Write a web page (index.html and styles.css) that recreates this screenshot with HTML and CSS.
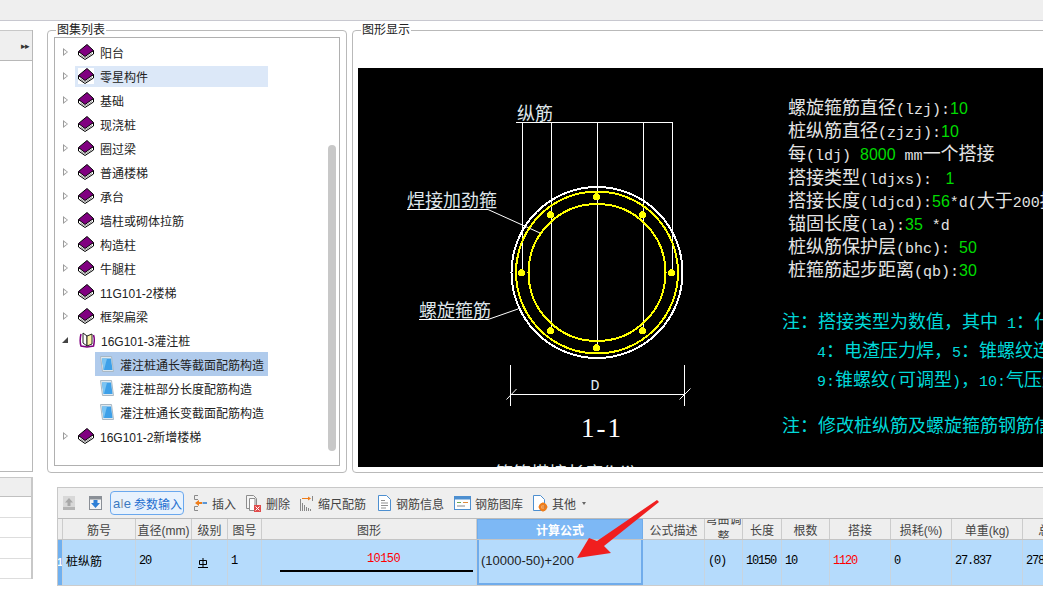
FILE: index.html
```html
<!DOCTYPE html>
<html lang="zh-CN">
<head>
    <meta charset="UTF-8">
    <title>图集列表</title>
    <link rel="stylesheet" href="styles.css">
</head>
<body>
    <svg class="defs" width="0" height="0">
        <symbol id="book" viewBox="0 0 16 16">
            <path d="M0.500 8V11L7 15.500 15.500 10V7Z" fill="#fff" stroke="#000"/>
            <path d="M2.500 11L7 14M7 14L14 9.500" stroke="#999" fill="none"/>
            <path d="M0.500 7.500L9 0.500 15.500 6.500 7 12.500Z" fill="#800080" stroke="#000"/>
        </symbol>
        <symbol id="book-open" viewBox="0 0 16 16">
            <path d="M2 2C1 6 1 11 2 14L8 15 14.500 14C15.500 10 15.500 6 14.500 3" fill="none" stroke="#800080" stroke-width="1.500"/>
            <path d="M4 1L8 4V14L4 11Z" fill="#fff" stroke="#222"/>
            <path d="M8 4L13 2V12L8 14Z" fill="#fdf4a8" stroke="#222"/>
        </symbol>
        <symbol id="doc" viewBox="0 0 14 18">
            <path d="M0.500 1.500H11.500L13.500 16.500H2.500Z" fill="#dfe8ee" stroke="#a9b8c4"/>
            <path d="M2 3.500H11L12.500 15H3.500Z" fill="#3ea0e8"/>
            <path d="M2 3.500H7L4 15H3.500Z" fill="#7cc4f2"/>
        </symbol>
    </svg>

    <div class="topbar"></div>

    <div class="workspace">
        <div class="side">
            <div class="side-top">
                <div class="side-head"><span class="side-arrows">&#9656;&#9656;</span></div>
            </div>
            <div class="side-bottom">
                <div class="side-row head"></div>
                <div class="side-row"></div>
                <div class="side-row"></div>
                <div class="side-row"></div>
                <div class="side-row"></div>
            </div>
        </div>

        <div class="main">
            <div class="upper">
                <div class="group group-tree">
                    <span class="legend">图集列表</span>
                    <div class="tree">
                        <div class="node"><i class="arrow"></i><div class="node-body"><svg class="book"><use href="#book"/></svg>阳台</div></div>
                        <div class="node hot"><i class="arrow"></i><div class="node-body"><svg class="book"><use href="#book"/></svg>零星构件</div></div>
                        <div class="node"><i class="arrow"></i><div class="node-body"><svg class="book"><use href="#book"/></svg>基础</div></div>
                        <div class="node"><i class="arrow"></i><div class="node-body"><svg class="book"><use href="#book"/></svg>现浇桩</div></div>
                        <div class="node"><i class="arrow"></i><div class="node-body"><svg class="book"><use href="#book"/></svg>圈过梁</div></div>
                        <div class="node"><i class="arrow"></i><div class="node-body"><svg class="book"><use href="#book"/></svg>普通楼梯</div></div>
                        <div class="node"><i class="arrow"></i><div class="node-body"><svg class="book"><use href="#book"/></svg>承台</div></div>
                        <div class="node"><i class="arrow"></i><div class="node-body"><svg class="book"><use href="#book"/></svg>墙柱或砌体拉筋</div></div>
                        <div class="node"><i class="arrow"></i><div class="node-body"><svg class="book"><use href="#book"/></svg>构造柱</div></div>
                        <div class="node"><i class="arrow"></i><div class="node-body"><svg class="book"><use href="#book"/></svg>牛腿柱</div></div>
                        <div class="node"><i class="arrow"></i><div class="node-body"><svg class="book"><use href="#book"/></svg>11G101-2楼梯</div></div>
                        <div class="node"><i class="arrow"></i><div class="node-body"><svg class="book"><use href="#book"/></svg>框架扁梁</div></div>
                        <div class="node"><i class="arrow open"></i><div class="node-body"><svg class="book"><use href="#book-open"/></svg>16G101-3灌注桩</div></div>
                        <div class="node child selected"><div class="node-body"><svg class="doc"><use href="#doc"/></svg>灌注桩通长等截面配筋构造</div></div>
                        <div class="node child"><div class="node-body"><svg class="doc"><use href="#doc"/></svg>灌注桩部分长度配筋构造</div></div>
                        <div class="node child"><div class="node-body"><svg class="doc"><use href="#doc"/></svg>灌注桩通长变截面配筋构造</div></div>
                        <div class="node"><i class="arrow"></i><div class="node-body"><svg class="book"><use href="#book"/></svg>16G101-2新增楼梯</div></div>
                        <div class="scroll-thumb"></div>
                    </div>
                </div>

                <div class="group group-view">
                    <span class="legend">图形显示</span>
                    <div class="canvas">
                        <svg class="drawing" viewBox="358 68 700 399" shape-rendering="crispEdges">
                            <g class="thin">
                                <path d="M516 122.500H672.500"/>
                                <path d="M522.500 122V272M551.500 122V330M597.500 122V347M643.500 122V330M672.500 122V272"/>
                                <path d="M407 209.500H488L540 233" shape-rendering="auto"/>
                                <path d="M419 319.500H488L518 309" shape-rendering="auto"/>
                                <path d="M510.500 365V406M684.500 365V406M510 394.500H685"/>
                                <path d="M506.500 399.500L516.500 389M679.500 399.500L690.500 388.500" shape-rendering="auto"/>
                            </g>
                            <circle class="ring-white" cx="597" cy="272.500" r="85.500"/>
                            <circle class="ring-yellow" cx="597" cy="272.500" r="81"/>
                            <circle class="ring-yellow" cx="597" cy="272.500" r="68.500"/>
                            <g class="bars">
                                <circle cx="521.500" cy="272.500" r="3.500"/>
                                <circle cx="550.500" cy="214.500" r="3.500"/>
                                <circle cx="596.500" cy="196.500" r="3.500"/>
                                <circle cx="642.500" cy="214.500" r="3.500"/>
                                <circle cx="671.500" cy="272.500" r="3.500"/>
                                <circle cx="642.500" cy="330.500" r="3.500"/>
                                <circle cx="596.500" cy="347.500" r="3.500"/>
                                <circle cx="550.500" cy="330.500" r="3.500"/>
                            </g>
                            <text class="label" x="517" y="120">纵筋</text>
                            <text class="label" x="407" y="207">焊接加劲箍</text>
                            <text class="label" x="419" y="317">螺旋箍筋</text>
                            <text class="dim" x="590.500" y="390">D</text>
                            <text class="section" x="581" y="437">1-1</text>
                            <text class="label" x="495" y="480">箍筋搭接长度(ldj)</text>
                        </svg>

                        <div class="spec">
                            <div>螺旋箍筋直径<span class="m">(lzj):</span><span class="g">10</span></div>
                            <div>桩纵筋直径<span class="m">(zjzj):</span><span class="g">10</span></div>
                            <div>每<span class="m">(ldj) </span><span class="g">8000</span><span class="m"> mm</span>一个搭接</div>
                            <div>搭接类型<span class="m">(ldjxs): </span><span class="g"> 1</span></div>
                            <div>搭接长度<span class="m">(ldjcd):</span><span class="g">56</span><span class="m">*d(</span>大于<span class="m">200</span>按</div>
                            <div>锚固长度<span class="m">(la):</span><span class="g">35</span><span class="m"> *d</span></div>
                            <div>桩纵筋保护层<span class="m">(bhc): </span><span class="g">50</span></div>
                            <div>桩箍筋起步距离<span class="m">(qb):</span><span class="g">30</span></div>
                        </div>

                        <div class="notes">
                            <div>注：搭接类型为数值，其中<span class="m"> 1</span>：什么</div>
                            <div class="indent"><span class="m">4</span>：电渣压力焊，<span class="m">5</span>：锥螺纹连接</div>
                            <div class="indent"><span class="m">9:</span>锥螺纹<span class="m">(</span>可调型<span class="m">)</span>，<span class="m">10:</span>气压焊</div>
                            <div class="gap">注：修改桩纵筋及螺旋箍筋钢筋信息</div>
                        </div>
                    </div>
                </div>
            </div>

            <div class="lower">
                <div class="toolbar">
                    <button class="tool move">
                        <svg width="12" height="14" viewBox="0 0 12 14"><rect width="12" height="14" fill="#d8d8d8"/><rect y="11" width="12" height="3" fill="#b4b4b4"/><path d="M6 2L10 6.500H7.500V10H4.500V6.500H2Z" fill="#a8a8a8"/></svg>
                    </button>
                    <button class="tool move">
                        <svg width="13" height="14" viewBox="0 0 13 14"><rect x="0.500" y="0.500" width="12" height="13" fill="#f4f4f4" stroke="#8a8f96"/><rect x="1" y="1" width="11" height="2.500" fill="#8a8f96"/><path d="M6.500 12L11 7H8.500V4H4.500V7H2Z" fill="#2e7fd6"/></svg>
                    </button>
                    <button class="tool active"><span class="ae">a<em>I</em>e</span>参数输入</button>
                    <button class="tool">
                        <svg width="13" height="18" viewBox="0 0 13 18"><path d="M4 1.500H0.500V5.500H4M4 12.500H0.500V16.500H4" fill="none" stroke="#8a8a8a"/><path d="M1 9L5 6V8H8V10H5V12Z" fill="#ef7d1a"/><rect x="8.500" y="8" width="4.500" height="2" fill="#5a96d6"/></svg>
                        插入
                    </button>
                    <button class="tool">
                        <svg width="15" height="17" viewBox="0 0 15 17"><path d="M0.500 0.500H7.500L10.500 3.500V13.500H0.500Z" fill="#f4f4f4" stroke="#8d8d8d"/><path d="M3.500 3.500H9V15.500H3.500Z" fill="#fff" stroke="#8d8d8d"/><rect x="8" y="10" width="7" height="7" fill="#e04a4a"/><path d="M9.500 11.500L13.500 15.500M13.500 11.500L9.500 15.500" stroke="#fff"/></svg>
                        删除
                    </button>
                    <button class="tool">
                        <svg width="13" height="15" viewBox="0 0 13 15"><path d="M0.500 3V15M2.500 7V15M4.500 9V15M6.500 11V15M8.500 12V15M10.500 13V15" stroke="#888"/><path d="M2 2.500H10" stroke="#ef7d1a"/><path d="M12.500 0V5" stroke="#888"/><path d="M8 0.500L11 2.500 8 4.500Z" fill="#ef7d1a"/></svg>
                        缩尺配筋
                    </button>
                    <button class="tool info">
                        <svg width="13" height="16" viewBox="0 0 13 16"><path d="M0.500 0.500H8.500L12.500 4.500V15.500H0.500Z" fill="#fff" stroke="#4d8fd0"/><path d="M3 5.500H7M3 8H10M3 10.500H10M3 13H8" stroke="#909090"/></svg>
                        钢筋信息
                    </button>
                    <button class="tool tight">
                        <svg width="17" height="14" viewBox="0 0 17 14"><rect x="0.500" y="0.500" width="16" height="13" fill="#fff" stroke="#4d8fd0"/><rect x="1" y="1" width="15" height="2.500" fill="#4d8fd0"/><path d="M3 6.500H7" stroke="#6aa84f"/><path d="M9 6.500H14" stroke="#e08a3c"/><path d="M3 10H11" stroke="#888"/></svg>
                        钢筋图库
                    </button>
                    <button class="tool tight">
                        <svg width="15" height="17" viewBox="0 0 15 17"><path d="M0.500 0.500H7.500L11.500 4.500V15.500H0.500Z" fill="#fff" stroke="#4d8fd0"/><circle cx="10" cy="12" r="3" fill="none" stroke="#ef7d1a" stroke-width="2.400"/><path d="M10 7.500V16.500M5.500 12H14.500" stroke="#ef7d1a" stroke-width="1.200"/></svg>
                        其他<i class="caret"></i>
                    </button>
                </div>

                <div class="grid-row grid-head">
                    <div></div>
                    <div>筋号</div>
                    <div>直径(mm)</div>
                    <div>级别</div>
                    <div>图号</div>
                    <div>图形</div>
                    <div class="formula">计算公式</div>
                    <div>公式描述</div>
                    <div class="wrap">弯曲调整</div>
                    <div>长度</div>
                    <div>根数</div>
                    <div>搭接</div>
                    <div>损耗(%)</div>
                    <div>单重(kg)</div>
                    <div>总重(kg)</div>
                </div>

                <div class="grid-row grid-body">
                    <div class="row-no">1</div>
                    <div class="cjk">桩纵筋</div>
                    <div>20</div>
                    <div><svg class="grade" width="10" height="11" viewBox="0 0 10 11"><path d="M1.500 2.500H8.500V6.500H1.500ZM5 0V9M0 9.500H10" fill="none" stroke="#000"/></svg></div>
                    <div>1</div>
                    <div class="shape"><span class="red">10150</span><i class="rebar"></i></div>
                    <div class="formula-cell">(10000-50)+200</div>
                    <div></div>
                    <div>(0)</div>
                    <div>10150</div>
                    <div>10</div>
                    <div class="red">1120</div>
                    <div>0</div>
                    <div>27.837</div>
                    <div>278.37</div>
                </div>
            </div>
        </div>
    </div>

    <svg class="callout" width="90" height="66" viewBox="0 0 90 66">
        <path d="M1 59L13 39 21 42 81 1 83 3 28 47 35 54Z" fill="#f01f1f"/>
    </svg>
</body>
</html>
```

FILE: styles.css
```css
html, body { margin: 0; height: 100%; overflow: hidden; }
body { background: #fff; color: #222; font-family: "Liberation Sans", "Noto Sans CJK SC", sans-serif; font-size: 12px; position: relative; }
.defs { position: absolute; }
.topbar { height: 20px; background: #efefef; border-bottom: 1px solid #c8c8d0; }

.workspace { display: flex; height: 568px; }

/* left strip */
.side { width: 33px; flex: none; padding-top: 9px; box-sizing: border-box; }
.side-top { height: 442px; box-sizing: border-box; border-right: 1px solid #b8b8b8; border-bottom: 1px solid #b8b8b8; }
.side-head { height: 31px; background: #efefef; border-top: 1px solid #c8c8c8; border-bottom: 1px solid #b8b8b8; box-sizing: border-box; display: flex; align-items: center; justify-content: flex-end; padding-right: 3px; }
.side-arrows { font-size: 9px; letter-spacing: -1px; color: #333; }
.side-bottom { margin-top: 5px; border-right: 2px solid #c8c8c8; }
.side-row { height: 20.500px; border-bottom: 1px solid #ddd; box-sizing: border-box; }
.side-row.head { height: 20px; background: #efefef; border-top: 1px solid #c8c8c8; border-bottom: 1px solid #c0c0c0; }

.main { flex: 1; min-width: 0; padding: 9px 0 0 14px; }
.upper { display: flex; gap: 5px; height: 443px; }

.group { position: relative; border: 1px solid #b9b9b9; border-radius: 4px; box-sizing: border-box; }
.legend { position: absolute; top: -8px; left: 8px; background: #fff; padding: 0 1px; line-height: 14px; color: #222; }
.group-tree { width: 300px; flex: none; padding: 6px; }
.group-view { width: 800px; flex: none; padding: 37px 0 0 5px; }

/* tree */
.tree { position: relative; height: 429px; box-sizing: border-box; border: 1px solid #b0b0b0; padding-top: 2px; }
.node { display: flex; align-items: center; height: 24px; padding-left: 8px; }
.arrow { width: 0; height: 0; margin-right: 7px; border-style: solid; border-width: 4px 0 4px 5px; border-color: transparent transparent transparent #9a9a9a; position: relative; }
.arrow::after { content: ""; position: absolute; left: -4px; top: -2.500px; width: 0; height: 0; border-style: solid; border-width: 2.500px 0 2.500px 3px; border-color: transparent transparent transparent #fff; }
.arrow.open { width: 0; margin-left: -1px; margin-right: 8px; border-width: 0 0 6px 6px; border-color: transparent transparent #444 transparent; }
.arrow.open::after { display: none; }
.node-body { display: flex; align-items: center; gap: 6px; width: 193px; height: 21px; margin-top: 1px; padding: 0 0 1px 3px; box-sizing: border-box; color: #222; white-space: nowrap; }
.book { width: 16px; height: 16px; flex: none; }
.hot .node-body { background: #dce8f8; }
.hot .book { background: #fff; }
.child { padding-left: 40px; }
.child .node-body { width: 173px; height: 24px; margin-top: 0; padding: 0 0 0 5px; }
.child.selected .node-body { background: #b0cbec; }
.doc { width: 14px; height: 18px; flex: none; }
.scroll-thumb { position: absolute; right: 3px; top: 107px; width: 8px; height: 306px; border-radius: 4px; background: #c8c8c8; }

/* drawing */
.canvas { position: relative; height: 399px; background: #000; overflow: hidden; color: #e4e4e4; font-size: 18px; }
.drawing { display: block; width: 700px; height: 399px; }
.thin { fill: none; stroke: #fff; stroke-width: 1; }
.ring-white { fill: none; stroke: #fff; stroke-width: 2; }
.ring-yellow { fill: none; stroke: #ff0; stroke-width: 2; }
.bars { fill: #ff0; }
.label { fill: #dfe6ea; font-size: 18px; font-family: "Noto Sans CJK SC", sans-serif; }
.dim { fill: #dfeaf4; font-size: 15px; font-family: "Liberation Mono", monospace; }
.section { fill: #fff; font-size: 27px; letter-spacing: 2px; font-family: "Liberation Serif", serif; }

.spec { position: absolute; left: 430px; top: 27px; width: 300px; white-space: nowrap; font-family: "Noto Sans CJK SC", sans-serif; }
.spec > div { height: 23.200px; line-height: 23.200px; }
.m { font-family: "Liberation Mono", monospace; font-size: 15px; white-space: pre; }
.g { color: #00dc00; font-family: "Liberation Sans", sans-serif; font-size: 16px; white-space: pre; }
.notes { position: absolute; left: 424px; top: 238px; width: 300px; white-space: nowrap; color: #00d8d8; font-family: "Noto Sans CJK SC", sans-serif; }
.notes > div { height: 29px; line-height: 29px; }
.indent { padding-left: 35px; }
.notes .gap { margin-top: 17px; }

/* lower table */
.lower { margin: 14px 0 0 10px; border-left: 1px solid #c8c8c8; border-top: 1px solid #c8c8c8; width: 1100px; }
.toolbar { display: flex; align-items: center; height: 30px; background: #efefef; border-bottom: 1px solid #bbb; padding-left: 5px; gap: 10px; }
.tool { display: flex; align-items: center; gap: 5px; border: 0; background: none; padding: 0; font: inherit; color: #444; white-space: nowrap; }
.tool.move { margin-right: 4px; }
.tool.info { margin-left: 2px; }
.tool.tight { gap: 4px; }
.tool.active { width: 74px; height: 24px; box-sizing: border-box; border: 1px solid #6aa8ee; border-radius: 4px; background: #e8f2fd; color: #1f6fd0; padding-left: 2px; gap: 3px; margin-left: -6px; }
.ae { color: #3a78c0; font-size: 13px; }
.ae em { font-style: normal; color: #999; }
.caret { display: inline-block; margin-left: 2px; border-style: solid; border-width: 3px 2.500px 0; border-color: #666 transparent transparent; vertical-align: middle; }

.grid-row { display: grid; grid-template-columns: 5px 73px 56px 36px 34px 215px 166px 62px 38px 39px 48px 61px 61px 71px 76px; }
.grid-row > div { border-right: 1px solid #ccc; box-sizing: border-box; overflow: hidden; white-space: nowrap; }
.grid-head { height: 21px; background: #eee; border-bottom: 1px solid #c4c4c4; box-sizing: border-box; color: #444; }
.grid-head > div { display: flex; align-items: center; justify-content: center; }
.grid-head .wrap { white-space: normal; text-align: center; line-height: 17px; }
.grid-head .formula { background: #7db8f5; color: #fff; font-weight: bold; border: 1px solid #70aceb; border-bottom: 0; }
.grid-body { height: 46px; background: #b5dbfc; border-bottom: 1px solid #ccc; box-sizing: border-box; font-family: "Liberation Mono", "Noto Sans CJK SC", monospace; font-size: 12px; letter-spacing: -1.200px; color: #000; }
.grid-body > div { display: flex; align-items: center; padding-left: 3px; padding-bottom: 4px; border-right-color: #c8d4de; }
.grid-body .cjk { font-size: 12px; letter-spacing: 0; font-family: "Noto Sans CJK SC", sans-serif; }
.grid-body .row-no { padding: 0; background: #6fb0f0; color: #fff; font-weight: bold; justify-content: center; font-family: "Liberation Sans", sans-serif; font-size: 10px; letter-spacing: 0; }
.grid-body .shape { flex-direction: column; align-items: flex-start; padding: 12px 0 0 18px; }
.red { color: #f00; }
.shape .red { margin-left: 87px; letter-spacing: -0.600px; height: 15px; line-height: 15px; }
.rebar { display: block; flex: none; width: 193px; height: 2px; margin-top: 3px; background: #000; }
.grid-body .formula-cell { border: 2px solid #70aceb; border-top: 0; font-family: "Liberation Sans", sans-serif; font-size: 13px; letter-spacing: 0; padding: 0 0 2px 2px; color: #222; }
.grade { margin-left: 3px; margin-top: 6px; }

.callout { position: absolute; left: 576px; top: 499px; }
```
